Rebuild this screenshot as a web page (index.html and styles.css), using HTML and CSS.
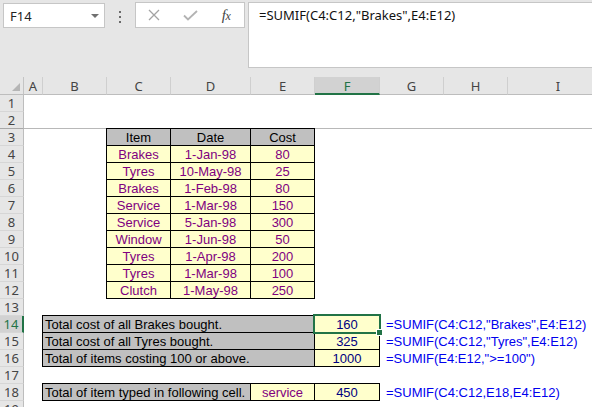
FILE: index.html
```html
<!DOCTYPE html>
<html>
<head>
<meta charset="utf-8">
<link rel="stylesheet" href="styles.css">
</head>
<body>
<div class="app">
  <div class="toolbar">
    <div class="namebox"><span>F14</span><span class="caret"></span></div>
    <div class="dots"><i></i><i></i><i></i></div>
    <div class="btns">
      <span class="slot"><svg width="12" height="12" viewBox="0 0 12 12"><path d="M1 1L11 11M11 1L1 11" stroke="#a3a3a3" stroke-width="1.3" fill="none"/></svg></span>
      <span class="slot"><svg width="15" height="11" viewBox="0 0 15 11"><path d="M1 5.5L5 9.5L14 1" stroke="#b3b3b3" stroke-width="1.8" fill="none"/></svg></span>
      <span class="slot fx">f<span class="fxx">x</span></span>
    </div>
    <div class="formula">=SUMIF(C4:C12,"Brakes",E4:E12)</div>
  </div>

  <div class="sheet">
    <div class="corner"><span class="tri"></span></div>
    <div class="ch">A</div>
    <div class="ch">B</div>
    <div class="ch">C</div>
    <div class="ch">D</div>
    <div class="ch">E</div>
    <div class="ch sel">F</div>
    <div class="ch">G</div>
    <div class="ch">H</div>
    <div class="ch last">I</div>

    <div class="rh r1">1</div>
    <div class="rh r2">2</div>
    <div class="rh r3">3</div>
    <div class="rh r4">4</div>
    <div class="rh r5">5</div>
    <div class="rh r6">6</div>
    <div class="rh r7">7</div>
    <div class="rh r8">8</div>
    <div class="rh r9">9</div>
    <div class="rh r10">10</div>
    <div class="rh r11">11</div>
    <div class="rh r12">12</div>
    <div class="rh r13">13</div>
    <div class="rh r14 sel">14</div>
    <div class="rh r15">15</div>
    <div class="rh r16">16</div>
    <div class="rh r17">17</div>
    <div class="rh r18">18</div>
    <div class="rh r19">19</div>

    <div class="freeze"></div>

    <div class="tbl">
      <div class="t th">Item</div><div class="t th">Date</div><div class="t th">Cost</div>
      <div class="t">Brakes</div><div class="t">1-Jan-98</div><div class="t">80</div>
      <div class="t">Tyres</div><div class="t">10-May-98</div><div class="t">25</div>
      <div class="t">Brakes</div><div class="t">1-Feb-98</div><div class="t">80</div>
      <div class="t">Service</div><div class="t">1-Mar-98</div><div class="t">150</div>
      <div class="t">Service</div><div class="t">5-Jan-98</div><div class="t">300</div>
      <div class="t">Window</div><div class="t">1-Jun-98</div><div class="t">50</div>
      <div class="t">Tyres</div><div class="t">1-Apr-98</div><div class="t">200</div>
      <div class="t">Tyres</div><div class="t">1-Mar-98</div><div class="t">100</div>
      <div class="t">Clutch</div><div class="t">1-May-98</div><div class="t">250</div>
    </div>

    <div class="box totals">
      <div class="t lbl">Total cost of all Brakes bought.</div><div class="t val active">160<span class="selframe"><span class="handle"></span></span></div>
      <div class="t lbl">Total cost of all Tyres bought.</div><div class="t val">325</div>
      <div class="t lbl">Total of items costing 100 or above.</div><div class="t val">1000</div>
    </div>

    <div class="box typed">
      <div class="t lbl">Total of item typed in following cell.</div><div class="t item">service</div><div class="t val">450</div>
    </div>

    <div class="note n14">=SUMIF(C4:C12,"Brakes",E4:E12)</div>
    <div class="note n15">=SUMIF(C4:C12,"Tyres",E4:E12)</div>
    <div class="note n16">=SUMIF(E4:E12,"&gt;=100")</div>
    <div class="note n18">=SUMIF(C4:C12,E18,E4:E12)</div>
  </div>
</div>
</body>
</html>
```

FILE: styles.css
```css
html, body {
  margin: 0;
  padding: 0;
  background: #ffffff;
}
.app {
  width: 592px;
  height: 407px;
  overflow: hidden;
  font-family: "Liberation Sans", Arial, sans-serif;
}

/* ---------- formula bar ---------- */
.toolbar {
  height: 77px;
  box-sizing: border-box;
  padding-top: 2px;
  background: #e6e6e6;
  display: flex;
  align-items: flex-start;
}
.namebox {
  margin: 1px 0 0 3px;
  width: 102px;
  height: 25px;
  box-sizing: border-box;
  background: #fff;
  border: 1px solid #c6c6c6;
  display: flex;
  align-items: center;
  justify-content: space-between;
  padding: 0 5px 0 6px;
  font: 13px "Noto Sans", sans-serif;
  color: #222;
}
.caret {
  width: 0;
  height: 0;
  border-left: 4px solid transparent;
  border-right: 4px solid transparent;
  border-top: 4px solid #707070;
}
.dots {
  margin: 9px 0 0 14px;
  display: flex;
  flex-direction: column;
  gap: 3px;
}
.dots i {
  display: block;
  width: 2px;
  height: 2px;
  background: #6a6a6a;
}
.btns {
  margin-left: 14px;
  width: 110px;
  height: 26px;
  box-sizing: border-box;
  border: 1px solid #c6c6c6;
  background: #fff;
  display: flex;
  align-items: center;
}
.slot {
  width: 36px;
  display: flex;
  justify-content: center;
  align-items: center;
}
.fx {
  font: italic 15px "Liberation Serif", serif;
  color: #444;
  letter-spacing: -0.5px;
}
.fxx {
  font-size: 12px;
  position: relative;
  top: 1px;
}
.formula {
  margin-left: 3px;
  flex: 1;
  height: 66px;
  box-sizing: border-box;
  background: #fff;
  border: 1px solid #c6c6c6;
  border-right: none;
  padding: 3px 0 0 10px;
  font: 13px "Noto Sans", sans-serif;
  line-height: 18px;
  color: #111;
  white-space: nowrap;
}

/* ---------- sheet ---------- */
.sheet {
  display: grid;
  grid-template-columns: 24px 19px 64px 64px 80px 64px 65px 64px 64px 100px;
  grid-template-rows: 18px repeat(19, 17px);
  width: 592px;
  overflow: hidden;
  font-size: 13px;
}
.corner {
  grid-column: 1;
  grid-row: 1;
  background: #e6e6e6;
  border-right: 1px solid #c4c4c4;
  border-bottom: 1px solid #bdbdbd;
  box-sizing: border-box;
  position: relative;
}
.tri {
  position: absolute;
  right: 3px;
  bottom: 3px;
  width: 0;
  height: 0;
  border-left: 8px solid transparent;
  border-bottom: 8px solid #b5b5b5;
}
.ch {
  grid-row: 1;
  background: #e6e6e6;
  border-right: 1px solid #cfcfcf;
  border-bottom: 1px solid #bdbdbd;
  box-sizing: border-box;
  text-align: center;
  font: 13px "Noto Sans", sans-serif;
  line-height: 18px;
  color: #444;
}
.ch.last { border-right: none; }
.ch.sel {
  background: #d2d2d2;
  color: #217346;
  border-bottom: 2px solid #217346;
}
.rh {
  grid-column: 1;
  background: #e6e6e6;
  border-right: 1px solid #bdbdbd;
  border-bottom: 1px solid #d6d6d6;
  box-sizing: border-box;
  text-align: center;
  font: 13px "Noto Sans", sans-serif;
  line-height: 17px;
  color: #444;
}
.rh.sel {
  background: #d2d2d2;
  color: #217346;
  border-right: 2px solid #217346;
}
.r1 { grid-row: 2; }
.r2 { grid-row: 3; border-bottom-color: #a8a8a8; }
.r3 { grid-row: 4; }
.r4 { grid-row: 5; }
.r5 { grid-row: 6; }
.r6 { grid-row: 7; }
.r7 { grid-row: 8; }
.r8 { grid-row: 9; }
.r9 { grid-row: 10; }
.r10 { grid-row: 11; }
.r11 { grid-row: 12; }
.r12 { grid-row: 13; }
.r13 { grid-row: 14; }
.r14 { grid-row: 15; }
.r15 { grid-row: 16; }
.r16 { grid-row: 17; }
.r17 { grid-row: 18; }
.r18 { grid-row: 19; }
.r19 { grid-row: 20; }

.freeze {
  grid-column: 2 / -1;
  grid-row: 3;
  border-bottom: 1px solid #b8b8b8;
}

/* bordered blocks: left/top borders sit on the previous gridline */
.tbl, .box {
  margin: -1px 0 0 -1px;
  border-left: 1px solid #000;
  border-top: 1px solid #000;
  display: grid;
  grid-auto-rows: 17px;
}
.tbl {
  grid-column: 4 / 7;
  grid-row: 4 / 14;
  grid-template-columns: 64px 80px 64px;
}
.totals {
  grid-column: 3 / 8;
  grid-row: 15 / 18;
  grid-template-columns: 272px 65px;
}
.typed {
  grid-column: 3 / 8;
  grid-row: 19;
  grid-template-columns: 208px 64px 65px;
}
.t {
  border-right: 1px solid #000;
  border-bottom: 1px solid #000;
  box-sizing: border-box;
  background: #ffffcc;
  color: #800080;
  text-align: center;
  line-height: 17px;
  white-space: nowrap;
  overflow: hidden;
}
.t.th {
  background: #c0c0c0;
  color: #000;
}
.t.lbl {
  background: #c0c0c0;
  color: #000;
  text-align: left;
  padding-left: 2px;
}
.t.val {
  color: #000080;
}
.t.active {
  position: relative;
  overflow: visible;
}
.selframe {
  position: absolute;
  left: -2px;
  top: -2px;
  right: -2px;
  bottom: -2px;
  border: 2px solid #217346;
  pointer-events: none;
}
.handle {
  position: absolute;
  right: -4px;
  bottom: -4px;
  width: 5px;
  height: 5px;
  background: #217346;
  border: 1px solid #fff;
}
.note {
  grid-column: 8 / 11;
  padding-left: 6px;
  color: #0000ee;
  line-height: 17px;
  white-space: nowrap;
}
.n14 { grid-row: 15; }
.n15 { grid-row: 16; }
.n16 { grid-row: 17; }
.n18 { grid-row: 19; }
```
